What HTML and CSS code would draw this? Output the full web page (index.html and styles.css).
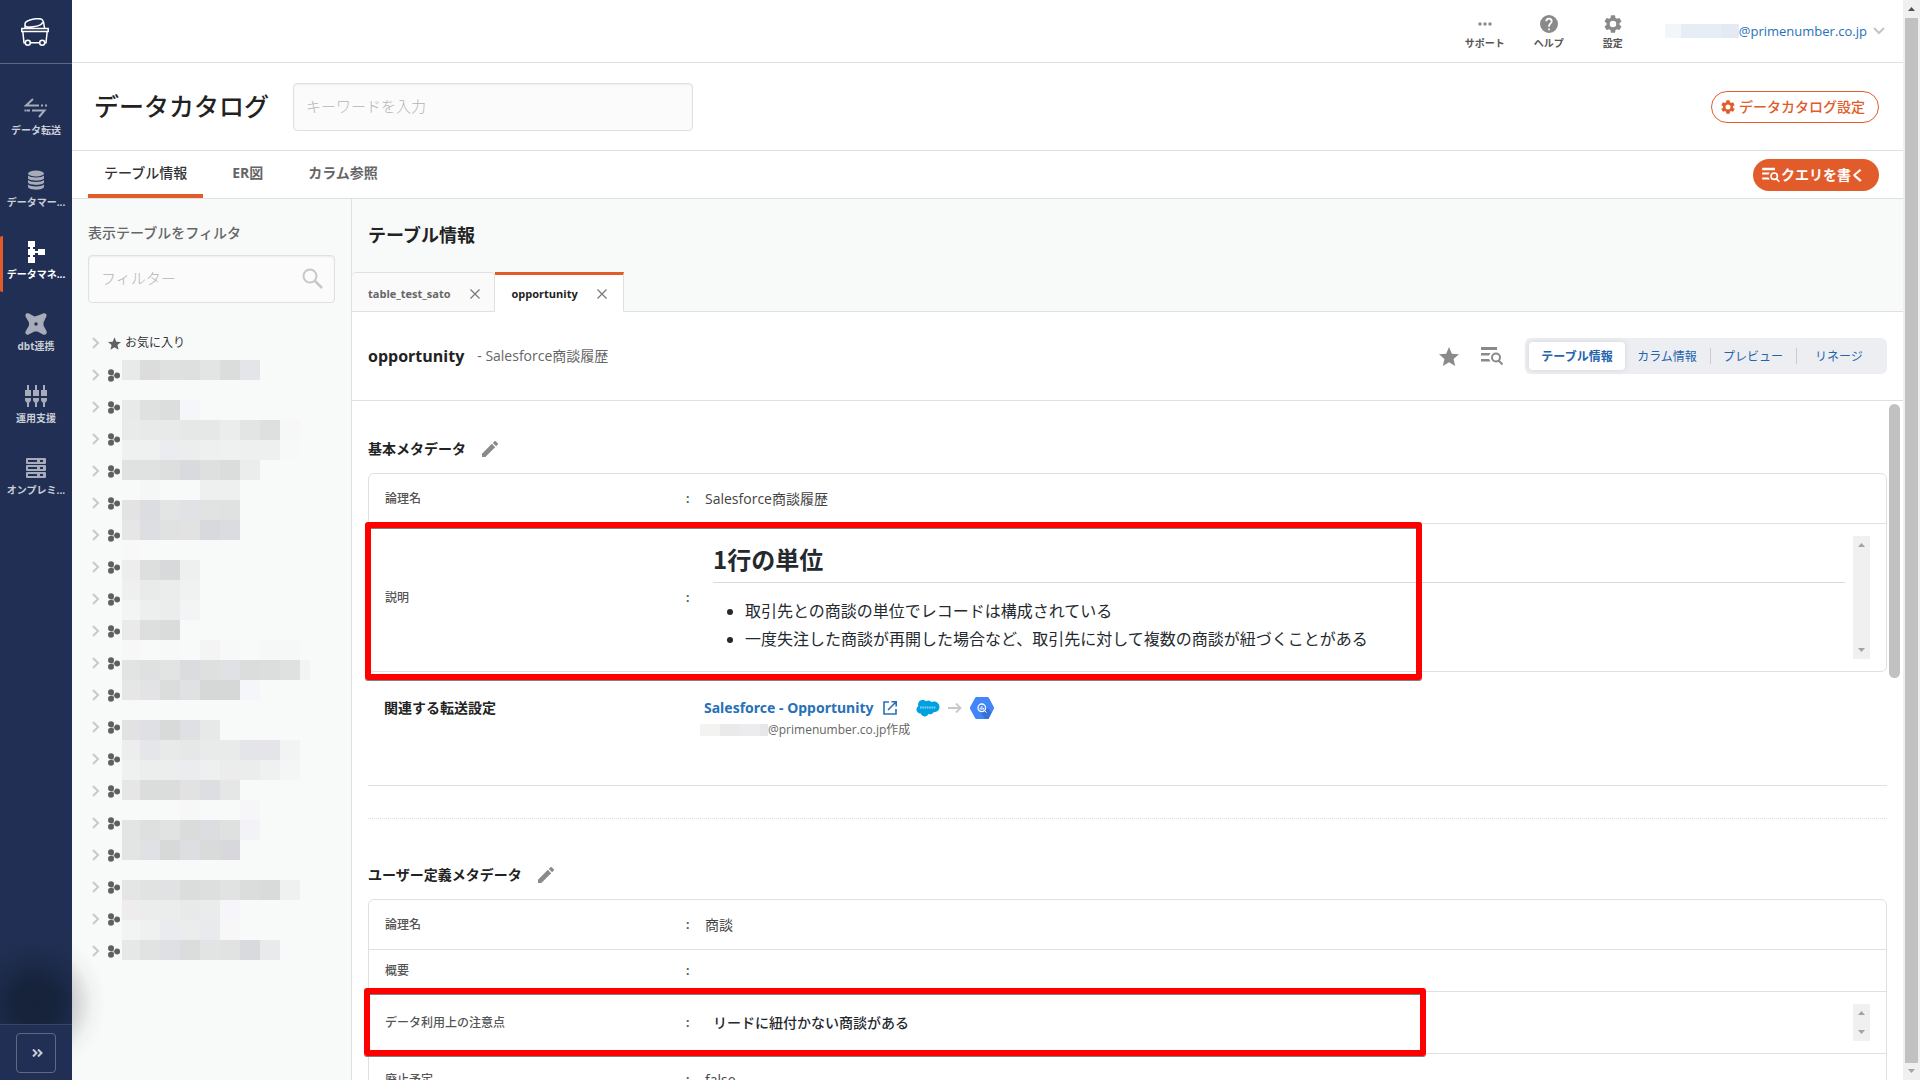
FILE: index.html
```html
<!DOCTYPE html>
<html lang="ja">
<head>
<meta charset="utf-8">
<title>データカタログ</title>
<link rel="stylesheet" href="styles.css">
</head>
<body>
<svg class="defs" aria-hidden="true">
  <symbol id="i-gear" viewBox="2 2 20 20"><path fill-rule="evenodd" d="M19.14 12.94c.04-.3.06-.61.06-.94 0-.32-.02-.64-.07-.94l2.03-1.58a.49.49 0 0 0 .12-.61l-1.92-3.32a.49.49 0 0 0-.59-.22l-2.39.96a7 7 0 0 0-1.62-.94l-.36-2.54A.48.48 0 0 0 13.920 2.400h-3.840a.47.47 0 0 0-.47.41l-.36 2.540a7.200 7.200 0 0 0-1.620.940l-2.390-.96a.48.48 0 0 0-.59.22L2.740 8.870a.47.47 0 0 0 .12.610l2.030 1.580c-.05.3-.09.63-.09.94s.02.64.07.94l-2.030 1.580a.49.49 0 0 0-.12.610l1.920 3.320c.12.22.37.29.59.22l2.390-.96c.5.38 1.030.7 1.620.94l.36 2.540c.05.24.24.41.48.41h3.840c.24 0 .44-.17.47-.41l.36-2.540a7 7 0 0 0 1.620-.94l2.390.96c.22.08.47 0 .59-.22l1.920-3.320a.47.47 0 0 0-.12-.61zM12 15.600a3.600 3.600 0 1 1 0-7.200 3.600 3.600 0 0 1 0 7.200z"/></symbol>
  <symbol id="i-star" viewBox="2 2 20 19"><path d="M12 17.270 18.180 21l-1.640-7.030L22 9.240l-7.190-.61L12 2 9.190 8.630 2 9.240l5.460 4.730L5.820 21z"/></symbol>
  <symbol id="i-pencil" viewBox="3 3 18 18"><path d="M3 17.250V21h3.750L17.810 9.940l-3.750-3.750L3 17.250zM20.710 7.040a1 1 0 0 0 0-1.410l-2.340-2.340a1 1 0 0 0-1.410 0l-1.830 1.830 3.750 3.750 1.830-1.830z"/></symbol>
  <symbol id="i-query" viewBox="0 0 22 20"><path d="M0 1h16v3H0zM0 7h9.500l-1.500 2.500H0zM0 13h8l1.500 2.500H0z"/><path fill="none" stroke="currentColor" stroke-width="2" d="M19 11.500a4 4 0 1 1-8 0 4 4 0 0 1 8 0zM17.500 14.500l4 4"/></symbol>
  <symbol id="i-chev" viewBox="0 0 8 12"><path fill="none" stroke="currentColor" stroke-width="2" d="M1 1l5 5-5 5"/></symbol>
  <symbol id="i-dots" viewBox="0 0 12 13"><circle cx="3" cy="3.200" r="3"/><circle cx="3" cy="9.800" r="3"/><circle cx="9.200" cy="6.500" r="2.900"/><path d="M3 3l6 3.500L3 10z" opacity=".35"/></symbol>
  <symbol id="i-close" viewBox="0 0 10 10"><path fill="none" stroke="currentColor" stroke-width="1.200" d="M.5.5l9 9M9.500.5l-9 9"/></symbol>
  <symbol id="i-up" viewBox="0 0 7 4"><path d="M3.500 0L7 4H0z"/></symbol>
  <symbol id="i-down" viewBox="0 0 7 4"><path d="M0 0h7L3.500 4z"/></symbol>
</svg>

<div class="app">
  <nav class="side" aria-label="メイン">
    <a class="side-logo" href="#" aria-label="ホーム">
      <svg width="28" height="28" viewBox="0 0 28 28" fill="none" stroke="#fff" stroke-width="1.500"><path d="M4 10V6c0-1.500 2-3 5-4s9-1.800 11-1c1.500.5 2 1.500 2.500 3l1 6M4 7c0 2 3 2.500 8 1.800S22 6.500 21.500 4M.8 10.500h26.400v3H.8zM1.800 13.500l1.200 11.200h1.200M26.200 13.500L25 24.700h-1.200M9.500 24.700h9"/><circle cx="6.800" cy="24.700" r="2.500"/><circle cx="21.200" cy="24.700" r="2.500"/></svg>
    </a>
    <div class="side-items">
      <a class="side-item" href="#"><svg width="24" height="24" viewBox="0 0 24 24"><path fill="none" stroke="currentColor" stroke-width="2" d="M9 3L2 9.500h13M3 14.500h3M8 14.500h12.500L15 21"/><path stroke="currentColor" stroke-width="2" d="M17 9.500h2M21 9.500h2M.5 14.500h2"/></svg><span>データ転送</span></a>
      <a class="side-item" href="#"><svg width="24" height="24" viewBox="0 0 24 24"><ellipse cx="12" cy="5.500" rx="8" ry="3"/><path d="M4 7.500c2 2.500 14 2.500 16 0v2.800c-1 3.200-15 3.200-16 0zM4 12c2 2.500 14 2.500 16 0v2.500c-1 3.200-15 3.200-16 0zM4 16.500c2 2.500 14 2.500 16 0V19c-1 3.500-15 3.500-16 0z"/></svg><span>データマー...</span></a>
      <a class="side-item active" href="#"><svg width="24" height="24" viewBox="0 0 24 24"><path d="M4 1h7v6H9v2h2v2h3V9h7v6h-7v-2h-3v2H9v2h2v6H4v-6h2v-2H4V9h2V7H4z"/></svg><span>データマネ...</span></a>
      <a class="side-item" href="#"><svg width="24" height="24" viewBox="0 0 24 24"><path fill-rule="evenodd" d="M1.500 2.500C2 1 4 1 5 1.500l5.500 3L14 3.500 19 1.500c2-.8 4 .5 3.500 2.500l-3 6.500v3l3 5.500c1 2.500-1 4.500-3.500 3.500l-5.500-3h-3l-6 3c-2 .8-3.800-1-3-3l3.500-6v-3L1.500 4.500zM12 10.300a1.700 1.700 0 1 0 0 3.400 1.700 1.700 0 0 0 0-3.400z"/></svg><span>dbt連携</span></a>
      <a class="side-item" href="#"><svg width="24" height="24" viewBox="0 0 24 24"><path d="M3 1h2v5h2v6H1V6h2zM11 1h2v5h2v6H9V6h2zM19 1h2v5h2v6h-6V6h2zM1 14h6v2.500L5 19v4H3v-4l-2-2.500zM9 14h6v2.500L13 19v4h-2v-4l-2-2.500zM17 14h6v2.500L21 19v4h-2v-4l-2-2.500z"/></svg><span>運用支援</span></a>
      <a class="side-item" href="#"><svg width="24" height="24" viewBox="0 0 24 24"><path fill-rule="evenodd" d="M3 2h18a1 1 0 0 1 1 1v4a1 1 0 0 1-1 1H3a1 1 0 0 1-1-1V3a1 1 0 0 1 1-1zm1 2v2h9V4zm12 0v2h3V4zM3 9h18a1 1 0 0 1 1 1v4a1 1 0 0 1-1 1H3a1 1 0 0 1-1-1v-4a1 1 0 0 1 1-1zm1 2v2h9v-2zm12 0v2h3v-2zM3 16h18a1 1 0 0 1 1 1v4a1 1 0 0 1-1 1H3a1 1 0 0 1-1-1v-4a1 1 0 0 1 1-1zm1 2v2h9v-2zm12 0v2h3v-2z"/></svg><span>オンプレミ...</span></a>
    </div>
    <div class="side-foot"><button class="expand" type="button" aria-label="メニューを開く"><svg width="11" height="8" viewBox="0 0 11 8"><path fill="none" stroke="currentColor" stroke-width="2" d="M1 .5L4.500 4 1 7.500M6 .5L9.500 4 6 7.500"/></svg></button></div>
  </nav>

  <div class="main">
    <header class="topbar">
      <a class="tool" href="#"><svg width="18" height="18" viewBox="0 0 18 18"><circle cx="4" cy="9" r="1.700"/><circle cx="9" cy="9" r="1.700"/><circle cx="14" cy="9" r="1.700"/></svg><span>サポート</span></a>
      <a class="tool" href="#"><svg width="18" height="18" viewBox="2 2 20 20"><path d="M12 2a10 10 0 1 0 0 20 10 10 0 0 0 0-20zm1 17h-2v-2h2v2zm2.070-7.750l-.9.920C13.450 12.900 13 13.500 13 15h-2v-.5c0-1.100.45-2.100 1.170-2.830l1.240-1.260A2 2 0 1 0 10 9H8a4 4 0 1 1 8 0c0 .88-.36 1.680-.93 2.250z"/></svg><span>ヘルプ</span></a>
      <a class="tool" href="#"><svg width="18" height="18"><use href="#i-gear"/></svg><span>設定</span></a>
      <button class="account" type="button"><span class="blur-account"><i></i><i></i><i></i></span>@primenumber.co.jp<svg width="12" height="8" viewBox="0 0 12 8"><path fill="none" stroke="#c4c4c4" stroke-width="2" d="M1 1l5 5 5-5"/></svg></button>
    </header>

    <div class="titlebar">
      <h1>データカタログ</h1>
      <input class="field keyword" type="text" placeholder="キーワードを入力" aria-label="キーワード">
      <button class="pill outline" type="button"><svg width="14" height="14"><use href="#i-gear"/></svg>データカタログ設定</button>
    </div>

    <div class="tabbar">
      <nav class="tabs" aria-label="表示切替">
        <a class="tab active" href="#">テーブル情報</a>
        <a class="tab" href="#">ER図</a>
        <a class="tab" href="#">カラム参照</a>
      </nav>
      <button class="pill solid" type="button"><svg width="18" height="16"><use href="#i-query"/></svg>クエリを書く</button>
    </div>

    <div class="body">
      <aside class="tables">
        <label class="filter-label" for="filter">表示テーブルをフィルタ</label>
        <div class="filter">
          <input class="field" id="filter" type="text" placeholder="フィルター">
          <svg class="filter-icon" width="21" height="21" viewBox="0 0 21 21" fill="none" stroke="#c8c8c8"><circle cx="8" cy="8" r="6.500" stroke-width="2"/><path stroke-width="2.500" d="M12.500 12.500l7.500 7.500"/></svg>
        </div>
        <div class="tree-wrap">
          <ul class="tree" id="tree">
            <li><svg class="chev" width="8" height="12"><use href="#i-chev"/></svg><svg width="13" height="13"><use href="#i-star"/></svg><span>お気に入り</span></li>
          </ul>
          <svg class="mosaic" id="mosaic" width="190" height="600" shape-rendering="crispEdges"></svg>
        </div>
      </aside>

      <main class="content">
        <div class="content-head">
          <h2>テーブル情報</h2>
          <div class="files">
            <div class="file"><a href="#">table_test_sato</a><button type="button" aria-label="閉じる"><svg width="10" height="10"><use href="#i-close"/></svg></button></div>
            <div class="file active"><a href="#">opportunity</a><button type="button" aria-label="閉じる"><svg width="10" height="10"><use href="#i-close"/></svg></button></div>
          </div>
        </div>

        <div class="object">
          <h3>opportunity</h3><p>- Salesforce商談履歴</p>
          <div class="object-tools">
            <button class="icon" type="button" aria-label="お気に入り"><svg width="20" height="19"><use href="#i-star"/></svg></button>
            <button class="icon" type="button" aria-label="クエリ"><svg width="22" height="20"><use href="#i-query"/></svg></button>
            <div class="segments">
              <button class="segment active" type="button">テーブル情報</button>
              <button class="segment" type="button">カラム情報</button>
              <button class="segment" type="button">プレビュー</button>
              <button class="segment" type="button">リネージ</button>
            </div>
          </div>
        </div>

        <div class="pane">
          <section>
            <h4>基本メタデータ<button class="icon" type="button" aria-label="編集"><svg width="16" height="16"><use href="#i-pencil"/></svg></button></h4>
            <div class="table-wrap">
              <table class="meta">
                <tr class="r50"><th scope="row">論理名</th><td class="colon">:</td><td>Salesforce商談履歴</td></tr>
                <tr><th scope="row">説明</th><td class="colon">:</td><td>
                  <div class="scroller">
                    <div class="markdown">
                      <h5>1行の単位</h5>
                      <ul><li>取引先との商談の単位でレコードは構成されている</li><li>一度失注した商談が再開した場合など、取引先に対して複数の商談が紐づくことがある</li></ul>
                    </div>
                    <div class="track"><svg width="7" height="4"><use href="#i-up"/></svg><svg width="7" height="4"><use href="#i-down"/></svg></div>
                  </div></td></tr>
              </table>
              <div class="mark mark-desc"></div>
            </div>
            <div class="related">
              <h4 class="related-label">関連する転送設定</h4>
              <div>
                <div class="related-line">
                  <a class="related-link" href="#">Salesforce - Opportunity<svg width="16" height="16" viewBox="0 0 16 16" fill="none" stroke="currentColor" stroke-width="1.600"><path d="M7 2H2v12h12V9M9.500 1.800h4.700v4.700M14 2L6 10"/></svg></a>
                  <svg width="24" height="18" viewBox="0 0 24 18"><path fill="#00a1e0" d="M10 2.200A4.300 4.300 0 0 1 15.500 3a5 5 0 0 1 2-.5A5.500 5.500 0 0 1 23.500 8c0 3-2.500 5.500-6 5.200-1 1.800-3 2.600-5 1.800-1 2.200-3.500 3-5.500 2-1.200-.6-2-1.600-2.300-2.500C2 14.500.5 12.500.5 10.500.5 9 1.200 7.800 2.300 7 1.500 4 3.300 1 6.300 1c1.600 0 2.900.5 3.700 1.200z"/><path stroke="#8fd3f0" stroke-width="2" stroke-dasharray="1.500 .8" d="M4 8.500h16"/></svg>
                  <svg width="14" height="12" viewBox="0 0 14 12"><path fill="none" stroke="#c8c8c8" stroke-width="1.800" d="M0 6h12M8 1.500L12.500 6 8 10.500"/></svg>
                  <svg width="24" height="22" viewBox="0 0 24 22"><path fill="#4386fa" d="M6.500 0h11a1.500 1.500 0 0 1 1.300.8l4.900 9a2 2 0 0 1 0 2.400l-4.900 9a1.500 1.500 0 0 1-1.300.8h-11a1.500 1.500 0 0 1-1.300-.8l-4.900-9a2 2 0 0 1 0-2.400l4.900-9A1.500 1.500 0 0 1 6.500 0z"/><path fill="#3871d6" d="M14.500 8l7 7.500-3 6.500h-3.500l-5-7z"/><circle cx="11.800" cy="10.800" r="3.800" fill="#4386fa" stroke="#fff" stroke-width="1.300"/><path stroke="#fff" d="M10.300 10.500v2M11.900 9v4M13.500 11v1.500M14.500 13.500l2 2"/></svg>
                </div>
                <p class="related-by"><span class="blur-by"><i></i><i></i><i></i><i></i></span>@primenumber.co.jp作成</p>
              </div>
            </div>
          </section>
          <hr class="solid-line"><hr class="dotted-line">
          <section>
            <h4>ユーザー定義メタデータ<button class="icon" type="button" aria-label="編集"><svg width="16" height="16"><use href="#i-pencil"/></svg></button></h4>
            <div class="table-wrap">
              <table class="meta">
                <tr class="r50"><th scope="row">論理名</th><td class="colon">:</td><td>商談</td></tr>
                <tr class="r42"><th scope="row">概要</th><td class="colon">:</td><td></td></tr>
                <tr><th scope="row">データ利用上の注意点</th><td class="colon">:</td><td>
                  <div class="scroller"><div class="markdown"><strong>リードに紐付かない商談がある</strong></div>
                  <div class="track"><svg width="7" height="4"><use href="#i-up"/></svg><svg width="7" height="4"><use href="#i-down"/></svg></div></div></td></tr>
                <tr class="r52"><th scope="row">廃止予定</th><td class="colon">:</td><td>false</td></tr>
              </table>
              <div class="mark mark-note"></div>
            </div>
          </section>
          <div class="pane-thumb"></div>
        </div>
      </main>
    </div>
  </div>

  <div class="page-scroll"><svg class="dark" width="7" height="4"><use href="#i-up"/></svg><div class="page-thumb"></div><svg width="7" height="4"><use href="#i-down"/></svg></div>
  <div class="glow"></div>
</div>
<script src="tree.js"></script>
</body>
</html>
```

FILE: styles.css
```css
* { box-sizing: border-box; }
body, h1, h2, h3, h4, h5, p, ul { margin: 0; padding: 0; }
body {
  font: 14px/20px "Open Sans", "Noto Sans CJK JP", sans-serif;
  color: #222;
  background: #fff;
}
a { color: inherit; text-decoration: none; }
button { font: inherit; border: 0; background: none; padding: 0; color: inherit; cursor: pointer; }
svg { flex: none; display: block; }
svg:not([fill]) { fill: currentColor; }
.defs { display: none; }

.app { display: flex; height: 100vh; overflow: hidden; position: relative; }

/* navigation rail */
.side { flex: 0 0 72px; display: flex; flex-direction: column; background: #202f53; color: #a6acba; }
.side-logo { height: 64px; display: flex; align-items: center; justify-content: center; border-bottom: 1px solid #5f6983; padding-right: 2px; }
.side-items { flex: 1; display: flex; flex-direction: column; gap: 16px; padding-top: 28px; }
.side-item { height: 56px; display: flex; flex-direction: column; align-items: center; padding-top: 4px; gap: 2px; font-size: 10px; font-weight: 700; line-height: 16px; border-left: 3px solid transparent; padding-right: 3px; white-space: nowrap; }
.side-item span { color: #c9cdd6; }
.side-item.active, .side-item.active span { color: #fff; }
.side-item.active { border-left-color: #e25b2b; border-radius: 2px; }
.side-foot { position: relative; z-index: 3; height: 56px; display: flex; align-items: center; justify-content: center; border-top: 1px solid #374566; background: #202f53; }
.expand { width: 40px; height: 40px; border: 1px solid #5f6983; border-radius: 4px; color: #c9cdd6; display: flex; align-items: center; justify-content: center; padding-left: 3px; }
.glow { position: absolute; left: -37px; bottom: 5px; width: 144px; height: 144px; z-index: 2; pointer-events: none; background: radial-gradient(closest-side, rgba(10,20,30,.5), rgba(10,20,30,.44) 28%, rgba(10,15,20,.16) 55%, rgba(10,10,30,.03) 80%, transparent); }

.main { flex: 1; min-width: 0; display: flex; flex-direction: column; }

/* top bar */
.topbar { flex: 0 0 63px; display: flex; justify-content: flex-end; padding-right: 18px; border-bottom: 1px solid #dfe1e1; }
.tool { width: 64px; display: flex; flex-direction: column; align-items: center; gap: 2px; padding-top: 15px; color: #8a8a8a; font-size: 10px; font-weight: 700; line-height: 16px; }
.tool span { color: #555; }
.account { margin-left: 20px; display: flex; align-items: center; color: #2871b8; font-size: 13px; }
.account svg { margin-left: 6px; }
.blur-account { display: flex; height: 14px; }
.blur-account i { width: 16px; background: #f2f5fa; }
.blur-account i + i { width: 40px; background: #e6edf5; }
.blur-account i + i + i { width: 18px; background: #e3eaf3; }

/* title row */
.titlebar { flex: 0 0 88px; display: flex; align-items: center; padding: 0 24px 0 22px; border-bottom: 1px solid #dfe1e1; }
h1 { font-size: 25px; line-height: 36px; font-weight: 500; margin-right: 24px; padding-bottom: 2px; }
.field { height: 48px; border: 1px solid #dfe0e0; border-radius: 4px; background: #fbfbfb; padding: 0 12px 2px; font: 15px/20px "Open Sans", "Noto Sans CJK JP", sans-serif; font-weight: 300; color: #333; box-shadow: inset 0 1px 2px rgba(0,0,0,.06); }
.field::placeholder { color: #b4b4b4; opacity: 1; }
.keyword { width: 400px; }
.pill { height: 32px; border-radius: 16px; padding: 0 13px 0 9px; display: flex; align-items: center; gap: 4px; margin-left: auto; font-weight: 500; }
.outline { border: 1px solid #e25b2b; color: #e25b2b; background: #fff; }
.solid { background: #e25b2b; color: #fff; font-weight: 700; padding-right: 14px; gap: 1px; }

/* page tabs */
.tabbar { flex: 0 0 48px; display: flex; align-items: center; padding: 0 24px 0 16px; border-bottom: 1px solid #dfe1e1; }
.tabs { display: flex; gap: 13px; align-self: stretch; }
.tab { height: 47px; padding: 12px 16px 0; border-bottom: 4px solid transparent; color: #666; font-weight: 700; }
.tab.active { border-color: #e25b2b; color: #333; font-weight: 500; }

.body { flex: 1; min-height: 0; display: flex; }

/* table list */
.tables { flex: 0 0 280px; background: #f8faf9; border-right: 1px solid #dfe1e1; padding: 24px 16px 0; }
.filter-label { display: block; color: #666; font-weight: 500; }
.filter { position: relative; margin-top: 12px; }
.filter .field { width: 100%; display: block; }
.filter-icon { position: absolute; right: 12px; top: 13px; }
.tree-wrap { position: relative; margin-top: 24px; }
.tree { list-style: none; }
.tree li { height: 32px; display: flex; align-items: center; padding-left: 4px; color: #5e6062; }
.tree .chev { color: #c8caca; margin-right: 8px; }
.tree li span { margin-left: 4px; color: #333; font-size: 12px; }
.mosaic { position: absolute; left: 34px; top: 33px; }

/* content */
.content { flex: 1; min-width: 0; display: flex; flex-direction: column; }
.content-head { flex: 0 0 113px; background: #f8faf9; display: flex; flex-direction: column; justify-content: space-between; padding-top: 23px; border-bottom: 1px solid #dfe1e1; }
h2 { font-size: 18px; line-height: 26px; font-weight: 700; padding-left: 16px; }
.files { display: flex; margin-bottom: -1px; }
.file { height: 40px; display: flex; align-items: center; gap: 19px; padding: 4px 14px 0 15px; font-size: 11px; font-weight: 700; color: #666; background: #fafafa; border: 1px solid #dfe1e1; border-left: 0; border-radius: 4px 4px 0 0; }
.file:first-child { padding-left: 16px; }
.file.active { color: #222; background: #fff; border-top: 3px solid #e25b2b; border-bottom-color: #fff; border-radius: 0; padding: 2px 16px 0 17px; }
.file button { color: #777; }
.object { flex: 0 0 89px; display: flex; align-items: center; padding: 0 16px; border-bottom: 1px solid #dfe1e1; }
h3 { font-size: 16px; line-height: 24px; font-weight: 700; margin-right: 13px; }
.object p { color: #666; font-weight: 400; }
.object-tools { margin-left: auto; display: flex; align-items: center; gap: 22px; }
.icon { color: #8a8a8a; }
.segments { display: flex; padding: 4px; background: #edeef2; border-radius: 6px; }
.segment { width: 86px; height: 28px; padding: 1px 2px 0 0; font-size: 12px; line-height: 28px; color: #2463ae; position: relative; }
.segment + .segment + .segment::before { content: ""; position: absolute; left: -1px; top: 6px; height: 16px; border-left: 1px solid #c9cbd0; }
.segment.active { width: 96px; padding-right: 0; background: #fff; border-radius: 4px; font-weight: 700; box-shadow: 0 0 6px rgba(0,0,0,.1); }

.pane { flex: 1; min-height: 0; overflow: hidden; position: relative; padding: 0 16px; }
.pane-thumb { position: absolute; right: 3px; top: 3px; width: 11px; height: 274px; border-radius: 6px; background: #c1c1c1; }
h4 { display: flex; align-items: center; gap: 16px; font-size: 14px; line-height: 24px; font-weight: 700; padding: 36px 0 12px; }
.table-wrap { position: relative; }
.meta { width: 100%; border: 1px solid #dfe1e1; border-radius: 6px; border-collapse: separate; border-spacing: 0; }
.meta th { width: 317px; padding: 0 0 0 16px; text-align: left; font-size: 12px; font-weight: 500; color: #555; }
.meta td { padding: 0; color: #444; }
.meta td.colon { width: 19px; font-size: 12px; font-weight: 700; color: #555; }
.meta tr + tr > * { border-top: 1px solid #dfe1e1; }
.r50 > * { height: 49px; }
.r42 > * { height: 42px; }
.r52 > * { height: 52px; }
.scroller { display: flex; justify-content: space-between; padding: 12px 16px 12px 8px; }
.markdown { flex: 1; margin-right: 8px; color: #24292e; align-self: center; }
.markdown h5 { font-family: "Noto Sans CJK JP", sans-serif; font-size: 24px; line-height: 32px; font-weight: 700; padding: 7px 0; border-bottom: 1px solid #d5dbe1; margin-bottom: 16px; }
.markdown ul { padding-left: 32px; font-size: 16px; line-height: 24px; padding-bottom: 8px; }
.markdown li + li { margin-top: 4px; }
.markdown strong { font-weight: 500; }
.track { width: 17px; min-height: 37px; display: flex; flex-direction: column; align-items: center; justify-content: space-between; padding: 7px 0; background: #f0f0f0; color: #a3a3a3; }
.mark { position: absolute; border: 6px solid #f00; border-radius: 3px; box-shadow: 0 1px 0 #808080, inset 0 1px 0 #808080; }
.mark-desc { left: -3px; top: 49px; width: 1057px; height: 158px; }
.mark-note { left: -4px; top: 89px; width: 1062px; height: 68px; }

.related { display: flex; padding: 24px 16px 0; height: 113px; }
.related-label { flex: 0 0 320px; padding: 0; align-self: flex-start; }
.related-line { display: flex; align-items: center; gap: 8px; height: 24px; }
.related-link { display: flex; align-items: center; gap: 9px; color: #2871b8; font-family: "Noto Sans", sans-serif; font-weight: 700; margin-right: 10px; }
.related-by { display: flex; align-items: center; margin-left: -4px; font-size: 12px; color: #666; }
.blur-by { display: flex; height: 12px; }
.blur-by i { width: 20px; background: #f3f3f2; }
.blur-by i + i { background: #eaeaeb; }
.blur-by i + i + i { background: #ececee; }
.blur-by i:last-child { width: 8px; background: #e6e7ea; }
hr { margin: 0; border: 0; }
.solid-line { border-top: 1px solid #dfe1e1; }
.dotted-line { border-top: 1px dotted #dadcdc; margin: 32px 0 8px; }

/* window scrollbar */
.page-scroll { flex: 0 0 17px; display: flex; flex-direction: column; align-items: center; justify-content: space-between; padding: 7px 0; background: #f0f0f0; color: #a3a3a3; }
.page-scroll .dark { color: #505050; }
.page-thumb { flex: 1; width: 13px; margin: 7px 0 6px; background: #c1c1c1; }
```

FILE: tree.js
```js
// Masked table names: one string per 20px band, one colour per cell, "-" leaves a cell clear.
const bands = [
  "e8eaea dddcdc dfe1e0 dee0df e3e5e4 dbdddc e4e5e8", "",
  "e8eaea dfe1e0 dcdedd f5f6f9",
  "e9ebea e8e9e9 e8eaea e6e8e7 e6e8e7 ebedec e3e4e4 dee0df f7f7f7",
  "eff1f0 eff1f0 ebecef eceeee eef0ef eff1f0 eef0f0 eef0f0 f7f8f8",
  "e0e2e1 e0e2e1 dddfde d9dadd dee0df dbdddc ebecec",
  "- f5f7f6 - - eef0ef eef0ef",
  "e3e3e3 dcdde0 e3e4e4 e1e2e5 e1e3e2 e0e2e1",
  "e6e6e6 dddee1 e0e2e1 e3e2e2 d8d9dd dbdcdf",
  "f7f8f7",
  "ededed dddfde d7d9db eeefef",
  "efefef e9eaea ebecec f0f1f1",
  "f3f5f5 edefee ebedec f3f4f6",
  "ebeaea dcdfdd dadcdb",
  "f6f7f6 f8f9f9 f7f8f8 - f4f4f4 f7f9f8 - f6f7f7 f6f7f7",
  "e2e4e3 dfe1e0 e2e4e3 dbdcdf dee0df e0e1e4 dbdddc dcdedd dfe1e0 f2f4f3",
  "e6e6e6 e3e3e6 dbdddc e0e1e3 d6d8d7 d6d8d7 f5f6f9", "",
  "e2e2e2 dfe0e3 d8dad9 dfe0e3 e7e9e8",
  "ededed e5e6ea e8eaea e6e8e7 e9ebea e9ebea e4e5e8 e5e5e9 f2f4f3",
  "eff1f0 eceeed eceeee ebecef eeefef edeced ebedec eff0f0 f4f5f5",
  "e6e6e6 dbdddc dbdddc e3e2e2 dddee1 e5e7e6",
  "- - - f6f7f6 - - f6f6f9",
  "e3e5e4 dee0df e1e3e2 dadcdb dcdde0 dfe1e0 f3f3f7",
  "e3e5e4 e0e1e4 d7d9d8 dddee1 d9dbda d8d8dc", "",
  "e4e6e5 e1e3e2 e0e2e4 dbdddc dddfde e1e3e2 dbdddc d9dbda eff1f0",
  "eeecec ebedec ebedec e8eaea eaecec f6f6fa",
  "f2f4f3 eff1f0 eaebee ebedec e9eaed f7f7f8",
  "e6e8e7 e1e3e2 dfe0e3 dbdddc e2e4e3 e1e3e2 d9dadd e9eaec"
];
document.getElementById("mosaic").innerHTML = bands.map((band, row) =>
  band.split(" ").map((c, col) => {
    if (!c || c === "-") return "";
    const x = col ? col * 20 - 2 : 0;
    const w = col === 0 ? 18 : col === 9 ? 10 : 20;
    return `<rect x="${x}" y="${row * 20}" width="${w}" height="20" fill="#${c}"/>`;
  }).join("")).join("");

const item = '<li><svg class="chev" width="8" height="12"><use href="#i-chev"/></svg>' +
  '<svg width="12" height="13"><use href="#i-dots"/></svg></li>';
document.getElementById("tree").insertAdjacentHTML("beforeend", item.repeat(19));
```
